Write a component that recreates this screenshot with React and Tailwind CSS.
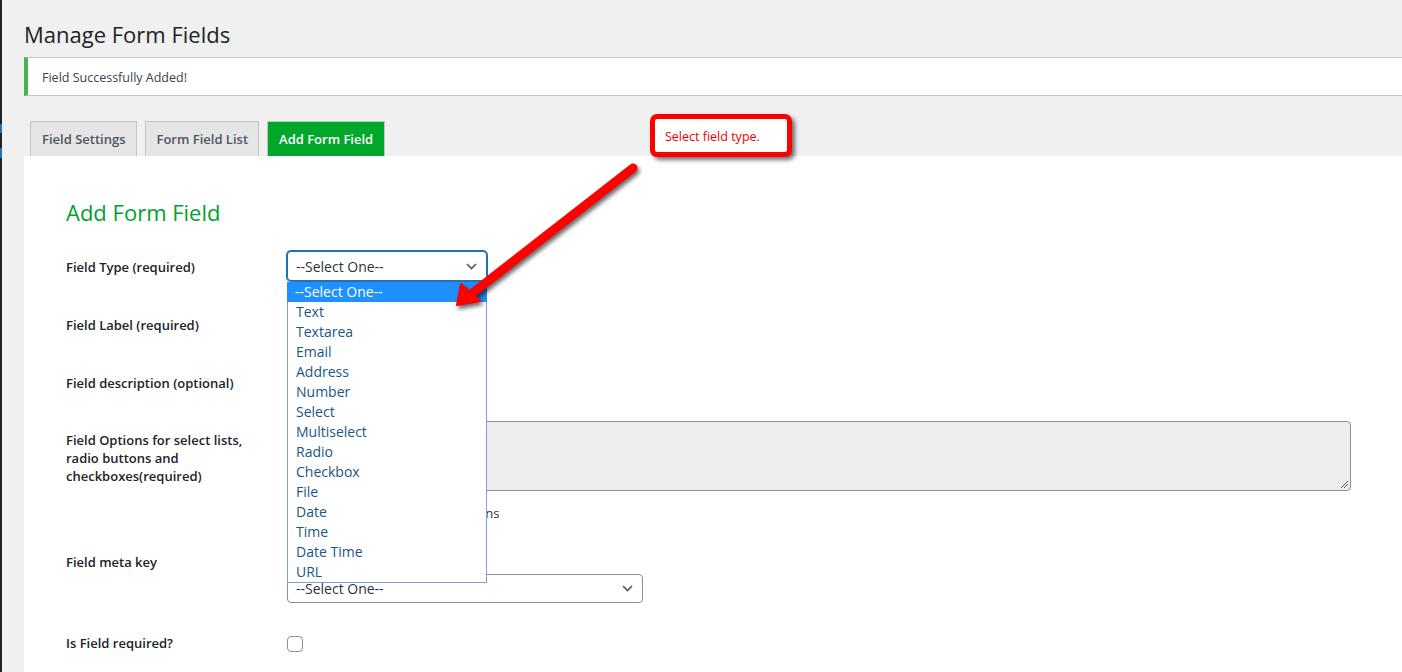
import React from "react";

const fieldTypes = [
  "--Select One--",
  "Text",
  "Textarea",
  "Email",
  "Address",
  "Number",
  "Select",
  "Multiselect",
  "Radio",
  "Checkbox",
  "File",
  "Date",
  "Time",
  "Date Time",
  "URL",
];

function Chevron() {
  return (
    <svg width="11" height="7" viewBox="0 0 11 7" fill="none" stroke="#50575e" strokeWidth="1.6">
      <path d="M1 1l4.5 4.5L10 1" />
    </svg>
  );
}

function SelectBox({ width, height = 30, focused }) {
  return (
    <div
      className={`flex items-center justify-between pl-[8px] pr-[9px] rounded-[4px] bg-white text-[14px] text-[#2c3338] border ${
        focused ? "border-[#2271b1] shadow-[0_0_0_1px_#2271b1]" : "border-[#8c8f94]"
      }`}
      style={{ width, height }}
    >
      <span>--Select One--</span>
      <Chevron />
    </div>
  );
}

function Row({ label, height, children }) {
  return (
    <div className="flex" style={{ height }}>
      <div className="w-[221px] pt-[20px] pr-[20px] text-[13px] leading-[18px] font-semibold text-[#1d2327]">
        {label}
      </div>
      <div className="flex-1">{children}</div>
    </div>
  );
}

export default function App() {
  return (
    <div
      className="relative flex h-[672px] overflow-hidden bg-[#f0f0f1]"
      style={{ fontFamily: '"Open Sans", "Noto Sans", sans-serif' }}
    >
      {/* admin menu edge */}
      <aside className="w-[2px] bg-[#1d2327] flex flex-col">
        <div className="h-[124px]" />
        <div className="h-[9px] bg-[#2271b1]" />
        <div className="h-[15px]" />
        <div className="h-[10px] bg-[#2271b1]" />
      </aside>

      <main className="flex-1 flex flex-col pl-[22px]">
        <h1 className="pt-[20px] text-[22px] leading-[29px] text-[#1d2327]">Manage Form Fields</h1>

        {/* success notice */}
        <div className="mt-[8px] h-[39px] bg-white border-y border-[#c3c4c7] border-l-4 border-l-[#46b450] pl-[14px] pt-[11px] text-[12.5px] leading-[17px] text-[#3c434a]">
          Field Successfully Added!
        </div>

        {/* tabs */}
        <nav className="mt-[25px] flex gap-[8px] pl-[6px]">
          <div className="h-[35px] flex items-center pt-[1px] px-[11px] border border-b-0 border-[#c3c4c7] bg-[#e5e5e5] text-[13px] font-semibold text-[#50575e]">
            Field Settings
          </div>
          <div className="h-[35px] flex items-center pt-[1px] px-[10px] border border-b-0 border-[#c3c4c7] bg-[#e5e5e5] text-[13px] font-semibold text-[#50575e]">
            Form Field List
          </div>
          <div className="h-[35px] flex items-center pt-[1px] px-[11px] border border-b-0 border-[#c3c4c7] bg-[#00a82a] text-[13px] font-semibold text-white">
            Add Form Field
          </div>
        </nav>

        {/* form panel */}
        <section className="flex-1 bg-white pl-[42px] pt-[42px]">
          <h2 className="text-[22px] leading-[28px] text-[#00a32a]">Add Form Field</h2>

          <div className="mt-[12px]">
            <Row label="Field Type (required)" height={58}>
              <div className="relative mt-[13px] w-[200px]">
                <SelectBox width={200} focused />
                <ul className="absolute z-10 left-0 top-[31px] w-[200px] bg-white border border-[#7f9fd3] text-[14px]">
                  {fieldTypes.map((t, i) => (
                    <li
                      key={t}
                      className={`h-[20px] leading-[20px] px-[8px] ${
                        i === 0 ? "bg-[#1e90ff] text-white -mx-px -mt-px" : "text-[#1b5584]"
                      }`}
                    >
                      {t}
                    </li>
                  ))}
                </ul>
              </div>
            </Row>

            <Row label="Field Label (required)" height={58}>
              <div className="mt-[14px] w-[200px] h-[30px] border border-[#8c8f94] rounded-[4px]" />
            </Row>

            <Row label="Field description (optional)" height={57}>
              <div className="mt-[14px] w-[200px] h-[30px] border border-[#8c8f94] rounded-[4px]" />
            </Row>

            <Row
              label="Field Options for select lists, radio buttons and checkboxes(required)"
              height={122}
            >
              <div className="mt-[10px] w-[1064px] h-[70px] rounded-[4px] border border-[#8c8f94] bg-[#eeeeee] relative">
                <svg className="absolute right-[2px] bottom-[2px]" width="8" height="8" viewBox="0 0 8 8" stroke="#50575e" strokeWidth="1">
                  <path d="M1 8L8 1M4 8L8 4" />
                </svg>
              </div>
              <p className="mt-[13px] flex items-center gap-[4px] text-[13px] leading-[18px] text-[#2c3338]">
                <span className="w-[6px] h-[6px] rounded-full bg-[#dba617]" />
                Comma separated list for options
              </p>
            </Row>

            <Row label="Field meta key" height={81}>
              <div className="mt-[12px] w-[16px] h-[16px] rounded-full border border-[#8c8f94]" />
              <div className="mt-[13px]">
                <SelectBox width={356} height={29} />
              </div>
            </Row>

            <Row label="Is Field required?" height={58}>
              <div className="mt-[22px] w-[16px] h-[16px] rounded-[4px] border border-[#8c8f94] bg-white" />
            </Row>
          </div>
        </section>
      </main>

      {/* annotation callout */}
      <div className="absolute z-20 left-[650px] top-[114px] w-[142px] h-[43px] rounded-[7px] border-[5px] border-[#ff0000] bg-white shadow-[3px_3px_4px_rgba(0,0,0,0.55)] flex items-center pl-[10px] pt-[3px] text-[12.5px] text-[#ee0000]">
        Select field type.
      </div>

      {/* annotation arrow */}
      <svg
        className="absolute z-20 left-0 top-0 pointer-events-none"
        width="1402"
        height="672"
        style={{ filter: "drop-shadow(2px 3px 2px rgba(0,0,0,0.6))" }}
      >
        <line x1="633" y1="168" x2="470" y2="295" stroke="#ff0000" strokeWidth="9" strokeLinecap="round" />
        <polygon points="457,305 461,284 480,301" fill="#ff0000" stroke="#ff0000" strokeWidth="2" strokeLinejoin="round" />
      </svg>
    </div>
  );
}
